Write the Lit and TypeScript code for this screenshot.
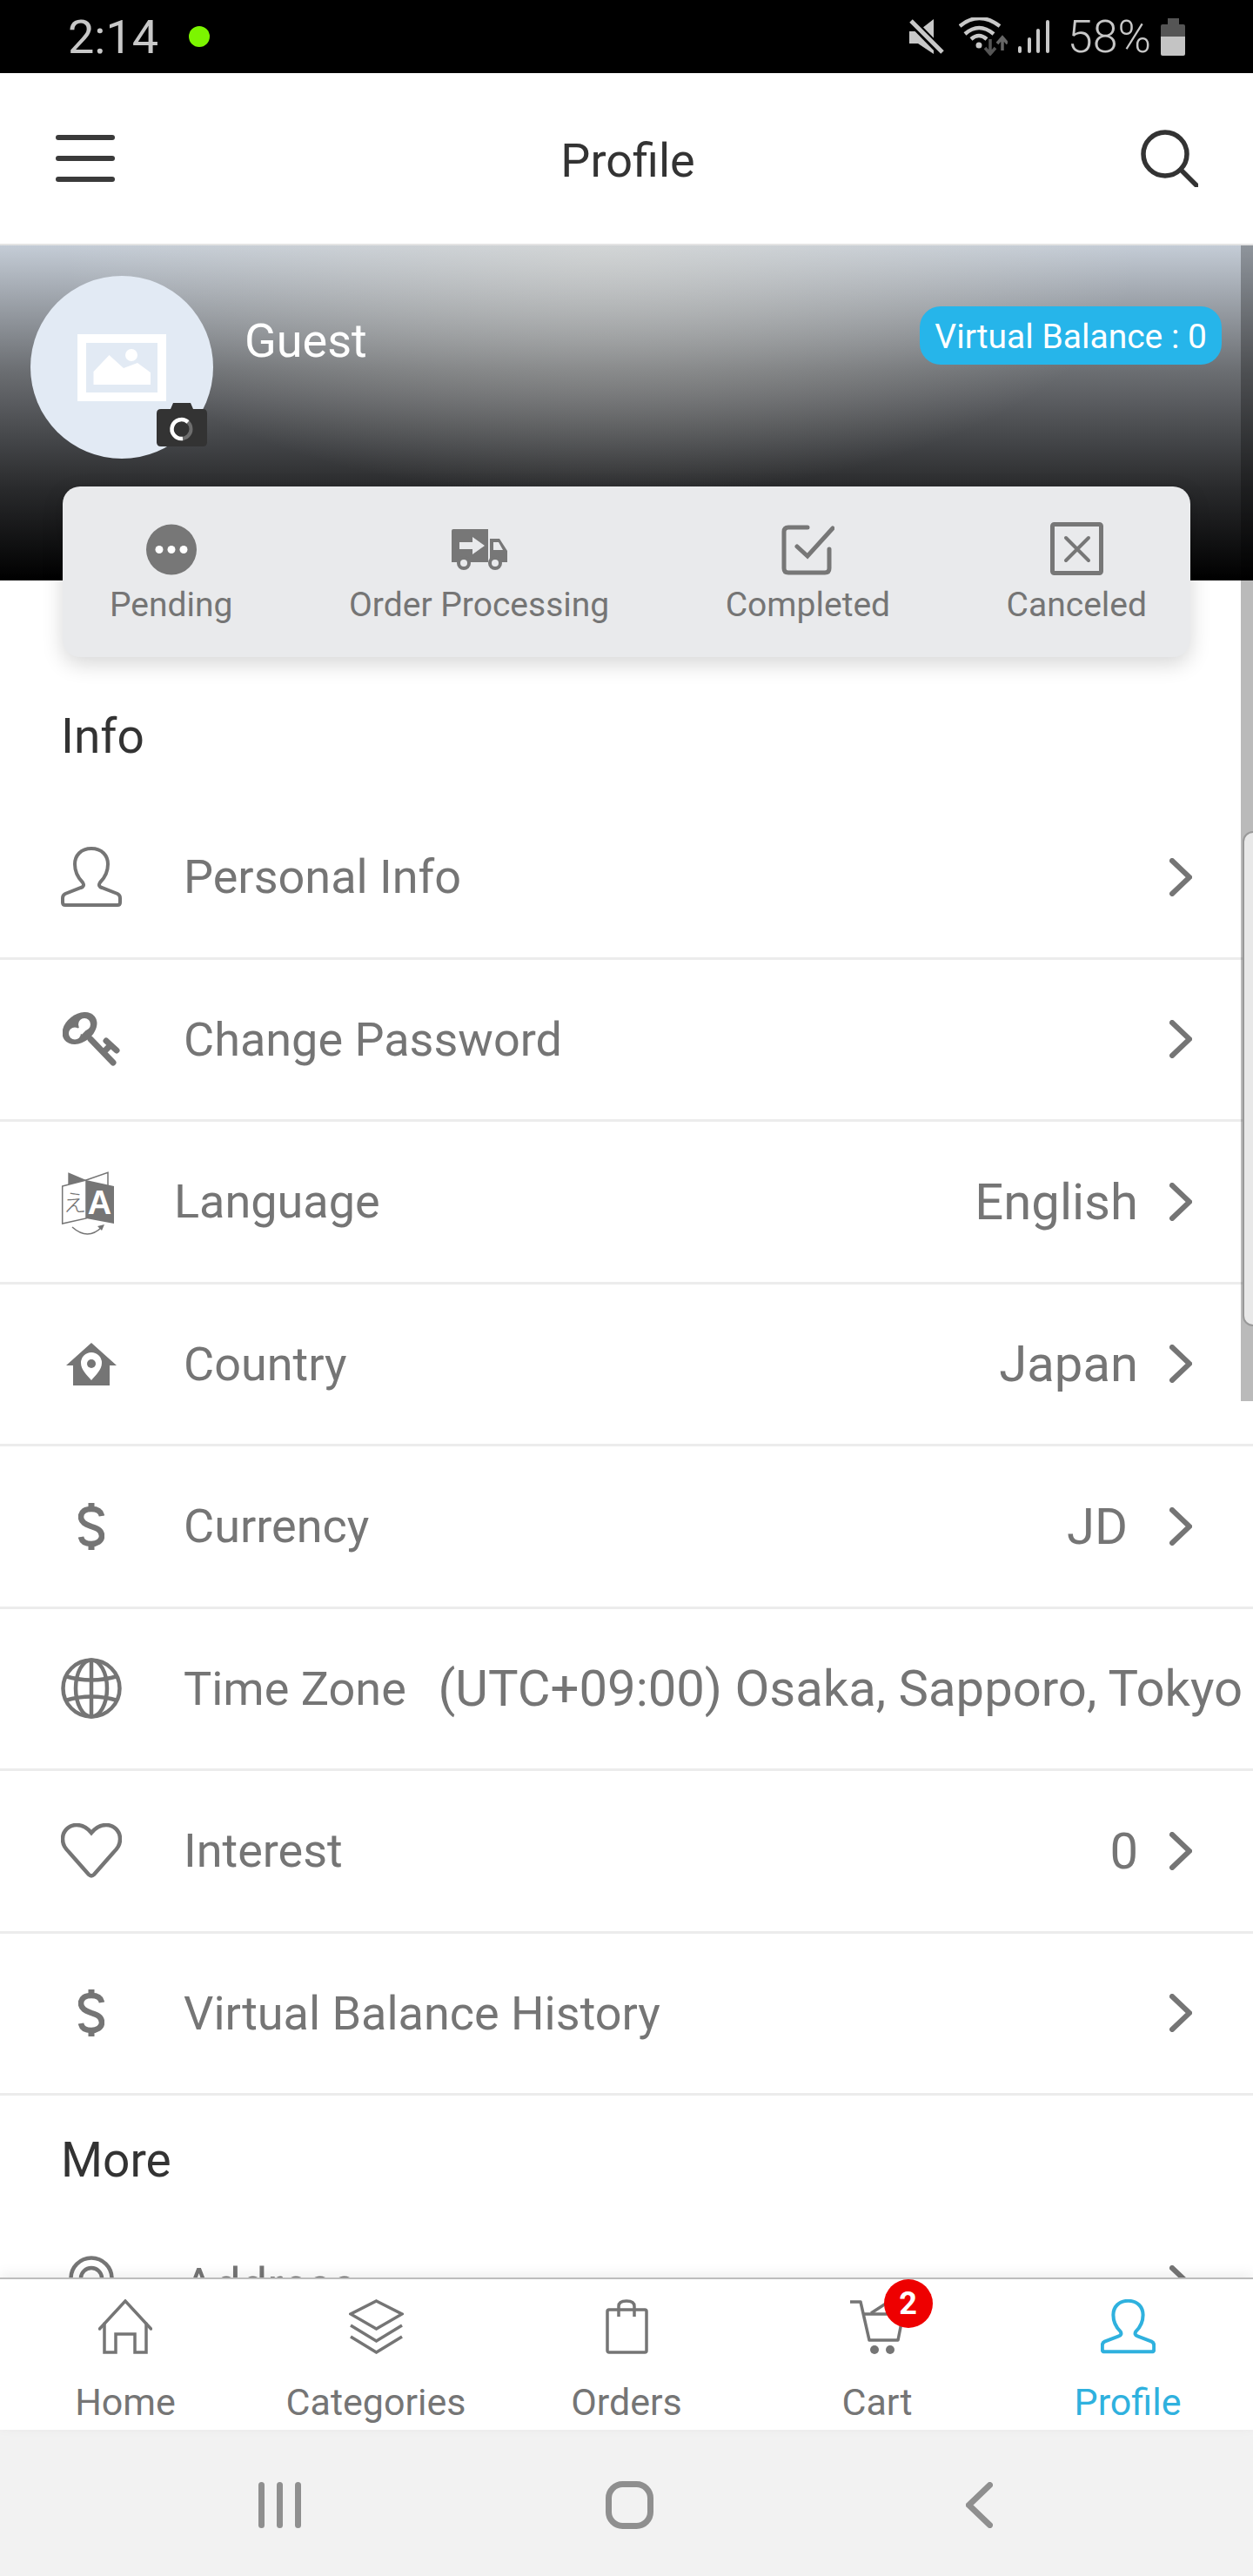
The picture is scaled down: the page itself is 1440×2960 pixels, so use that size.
import { LitElement, html, css, nothing } from "lit";
import { customElement } from "lit/decorators.js";

const personPath = "M35 2C23 2 16 10 16 20C16 30 20 36 25 41C27 44 26 46 23 47L5 54C3 55 2 57 2 59V64C2 66 3 67 5 67H65C67 67 68 66 68 64V59C68 57 67 55 65 54L47 47C44 46 43 44 45 41C50 36 54 30 54 20C54 10 47 2 35 2Z";

const icons: Record<string, unknown> = {
  person: html`<svg width="70" height="70" viewBox="0 0 70 70" fill="none" stroke="#757575" stroke-width="4"><path d=${personPath}/></svg>`,
  key: html`<svg width="66" height="62" viewBox="0 0 66 62"><ellipse cx="19.500" cy="18.500" rx="22" ry="16" transform="rotate(-38 19.500 18.500)" fill="#757575"/><circle cx="14" cy="24.500" r="7" fill="#fff"/><circle cx="25" cy="14" r="7" fill="#fff"/><rect x="18" y="16" width="8" height="8" transform="rotate(45 22 20)" fill="#fff"/><path d="M32 31L58 58M50 33L62 44M47 46L55 38" stroke="#757575" stroke-width="7" stroke-linecap="round" fill="none"/></svg>`,
  lang: html`<svg class="ovf" width="61" height="70" viewBox="0 0 61 70"><path d="M7.300 1.300L28 10L7.300 17Z" fill="#757575"/><path d="M28 10L53 1.300V17" fill="none" stroke="#757575" stroke-width="1.500"/><path d="M0.700 17L28 10V54L0.700 60Z" fill="#fff" stroke="#757575" stroke-width="1.500"/><path d="M28 10L60 17V60L28 54Z" fill="#757575"/><text x="15" y="46" font-size="27" text-anchor="middle" fill="#757575" font-family="'Noto Sans CJK JP',sans-serif" font-weight="300">え</text><text x="43.500" y="49" font-size="38" text-anchor="middle" fill="#fff" font-family="'Liberation Sans',sans-serif" font-weight="700">A</text><path d="M12 64Q30 80 46 64" fill="none" stroke="#757575" stroke-width="1.500"/><path d="M49 61L41 63L46 68Z" fill="#757575"/></svg>`,
  country: html`<svg width="58" height="49" viewBox="0 0 58 49"><path d="M29 0L58 26H50V49H8V26H0Z" fill="#757575"/><path d="M29 43C24 37 17 31 17 23A12 12 0 0 1 41 23C41 31 34 37 29 43Z" fill="#fff"/><circle cx="29" cy="24" r="5" fill="#757575"/></svg>`,
  dollar: html`<svg width="30" height="54" viewBox="0 0 30 54" fill="none"><path d="M15 0V8M15 46V54" stroke="#757575" stroke-width="7"/><path d="M27 15C26 9 21 7 15 7C8 7 3 10 3 16C3 23 10 25 15 27C21 29 27 31 27 38C27 44 21 47 15 47C9 47 4 45 3 39" stroke="#757575" stroke-width="6.500"/></svg>`,
  globe: html`<svg width="70" height="70" viewBox="0 0 70 70" fill="none" stroke="#757575" stroke-width="4.500"><circle cx="35" cy="35" r="32.500"/><ellipse cx="35" cy="35" rx="18" ry="32.500"/><path d="M35 2V68"/><path d="M5 21Q35 30 65 21M5 49Q35 40 65 49"/></svg>`,
  heart: html`<svg width="70" height="63" viewBox="0 0 70 63" fill="none" stroke="#757575" stroke-width="4.500"><path d="M35 11C30 5 25 2 18 2C9 2 2 9 2 18C2 25 5 29 10 34L32 59C34 61 36 61 38 59L60 34C65 29 68 25 68 18C68 9 61 2 52 2C45 2 40 5 35 11Z"/></svg>`,
  pin: html`<svg width="52" height="66" viewBox="0 0 52 66" fill="none" stroke="#757575" stroke-width="4.500"><path d="M2.500 26A23.500 23.500 0 0 1 49.500 26C49.500 40 34 54 26 64C18 54 2.500 40 2.500 26Z"/><circle cx="26" cy="26" r="12"/></svg>`,
  chevron: html`<svg width="26" height="44" viewBox="0 0 26 44" fill="none" stroke="#757575" stroke-width="6" stroke-linecap="round" stroke-linejoin="miter"><path d="M3 3L23 22L3 41"/></svg>`,
};

const rows = [
  { icon: "person", label: "Personal Info" },
  { icon: "key", label: "Change Password" },
  { icon: "lang", label: "Language", value: "English", tight: true },
  { icon: "country", label: "Country", value: "Japan" },
  { icon: "dollar", label: "Currency", value: "JD", pad: true },
  { icon: "globe", label: "Time Zone", value: "(UTC+09:00) Osaka, Sapporo, Tokyo", noChevron: true },
  { icon: "heart", label: "Interest", value: "0" },
  { icon: "dollar", label: "Virtual Balance History" },
];

@customElement("app-root")
export class AppRoot extends LitElement {
  static styles = css`
    :host { display: flex; flex-direction: column; width: 1440px; height: 2960px; overflow: hidden; background: #fff; font-family: Roboto, sans-serif; color: #757575; }
    svg { display: block; flex: none; }
    svg.ovf { overflow: visible; }
    .status { flex: none; height: 84px; background: #000; display: flex; align-items: center; padding: 0 78px; box-sizing: border-box; color: #c8c8c8; font-size: 54px; }
    .status .dot { width: 24px; height: 24px; border-radius: 50%; background: #7cf500; margin-left: 35px; }
    .status .right { margin-left: auto; display: flex; align-items: center; }
    .status .pct { font-size: 52px; font-weight: 300; margin: 0 11px 0 21px; }
    .header { flex: none; height: 198px; box-sizing: border-box; border-bottom: 2px solid #e4e4e4; display: flex; align-items: center; justify-content: space-between; padding: 0 63px 0 64px; }
    .header .title { font-size: 54px; color: #333; padding-top: 4px; }
    .main { flex: 1; min-height: 0; position: relative; overflow: hidden; }
    .hero { height: 385px; box-sizing: border-box; padding: 35px 36px 0 35px; display: flex; align-items: flex-start;
      background: radial-gradient(ellipse 620px 290px at 48% 0, rgba(224,222,214,.5), rgba(224,222,214,0)), linear-gradient(#c4ccd6 0%, #6c6f73 37%, #2a2b2d 72%, #000 100%); }
    .avatar { position: relative; flex: none; width: 210px; height: 210px; border-radius: 50%; background: #e2eaf4; display: flex; align-items: center; justify-content: center; }
    .avatar .cam { position: absolute; left: 145px; top: 146px; }
    .name { font-size: 54px; line-height: 60px; color: #fff; margin: 45px 0 0 36px; }
    .pill { margin: 35px 0 0 auto; height: 67px; line-height: 70px; padding: 0 17px; border-radius: 24px; background: #26b5ea; color: #fff; font-size: 39px; }
    .card { position: relative; margin: -108px 72px 0 72px; height: 196px; box-sizing: border-box; padding: 40px 50px 0 54px; border-radius: 20px; background: #e9eaec; box-shadow: 0 8px 24px rgba(0,0,0,.16); display: flex; justify-content: space-between; }
    .st { display: flex; flex-direction: column; align-items: center; font-size: 39px; line-height: 46px; }
    .st .ic { height: 62px; display: flex; align-items: flex-end; }
    .st .lb { margin-top: 11px; }
    .h { font-size: 55px; line-height: 60px; color: #333; padding-left: 70px; }
    .h.info { padding-top: 61px; padding-bottom: 40px; }
    .h.more { padding-top: 44px; padding-bottom: 20px; }
    .row { height: 186.5px; box-sizing: border-box; border-bottom: 3px solid #ececec; display: flex; align-items: center; padding: 0 70px 0 65px; font-size: 54px; white-space: nowrap; }
    .row.last { border: 0; }
    .row .ico { width: 80px; flex: none; display: flex; justify-content: center; }
    .row.tight .ico { margin-left: -4px; }
    .row .label { margin-left: 66px; }
    .row.tight .label { margin-left: 59px; }
    .row .val { margin-left: auto; font-size: 58px; }
    .row .val.pad { padding-right: 12px; }
    .row .chev { margin-left: 36px; flex: none; }
    .row .label + .chev { margin-left: auto; }
    .row.wide { padding-right: 12px; }
    .scroll { position: absolute; right: 0; top: 0; width: 14px; height: 1328px; background: rgba(0,0,0,.27); }
    .edge { position: absolute; right: -12px; top: 673px; width: 24px; height: 569px; box-sizing: border-box; background: #e8e8e8; border: 2px solid #999; border-radius: 14px; }
    .nav { flex: none; position: relative; height: 175px; box-sizing: border-box; border-top: 2px solid #bdbdbd; background: #fff; display: flex; box-shadow: 0 -4px 14px rgba(0,0,0,.07); }
    .tab { flex: 1; display: flex; flex-direction: column; align-items: center; padding-top: 23px; font-size: 43px; line-height: 50px; }
    .tab .ic { position: relative; height: 63px; }
    .tab .lb { margin-top: 30px; }
    .tab.active { color: #2fb1de; }
    .badge { position: absolute; left: 39px; top: -23px; width: 56px; height: 56px; border-radius: 50%; background: #ee0000; color: #fff; font-size: 36px; font-weight: 700; line-height: 56px; text-align: center; }
    .sys { flex: none; height: 168px; box-sizing: border-box; padding-top: 4px; background: #f2f2f2; display: flex; align-items: center; padding-left: 297px; }
    .sys .home { margin-left: 349px; }
    .sys .back { margin-left: 359px; }
  `;

  render() {
    return html`
      <div class="status">
        <span>2:14</span><span class="dot"></span>
        <div class="right">
          <svg width="40" height="42" viewBox="0 0 40 42"><path d="M0 15H10L28 1V41L10 29H0Z" fill="#c8c8c8"/><path d="M-2 -1L38 40" stroke="#000" stroke-width="10"/><path d="M2 3L38 39" stroke="#c8c8c8" stroke-width="5"/></svg>
          <svg style="margin-left:17px" width="56" height="44" viewBox="0 0 56 44" fill="none" stroke="#c8c8c8" stroke-width="4.500"><path d="M1 10Q23 -8 47 10M7 19Q23 5 40 19M14 25Q23 17 32 25"/><circle cx="23" cy="32" r="3.500" fill="#c8c8c8" stroke="none"/><path d="M36 25V42M30 35L36 42L42 35" stroke="#555" stroke-width="3.500"/><path d="M50 38V24M44 30L50 23L56 30" stroke="#666" stroke-width="3.500"/></svg>
          <svg style="margin-left:12px" width="36" height="38" viewBox="0 0 36 38" fill="#c8c8c8"><rect x="0" y="30" width="4" height="8" rx="2"/><rect x="11" y="20" width="4" height="18" rx="2"/><rect x="21" y="10" width="4" height="28" rx="2"/><rect x="32" y="0" width="4" height="38" rx="2"/></svg>
          <span class="pct">58%</span>
          <svg width="28" height="43" viewBox="0 0 28 43"><path d="M8 0H21V7H26Q28 7 28 9V21H0V9Q0 7 2 7H8Z" fill="#555"/><path d="M0 21H28V41Q28 43 26 43H2Q0 43 0 41Z" fill="#c4c4c4"/></svg>
        </div>
      </div>
      <div class="header">
        <svg width="68" height="54" viewBox="0 0 68 54" fill="#3a3a3a"><rect width="68" height="6" rx="3"/><rect y="24" width="68" height="6" rx="3"/><rect y="48" width="68" height="6" rx="3"/></svg>
        <span class="title">Profile</span>
        <svg width="66" height="66" viewBox="0 0 66 66" fill="none" stroke="#333" stroke-width="5.500"><circle cx="28" cy="28" r="25"/><path d="M46 46L64 64" stroke-linecap="round"/></svg>
      </div>
      <div class="main">
        <div class="hero">
          <div class="avatar">
            <svg width="102" height="77" viewBox="0 0 102 77"><rect x="5" y="5" width="92" height="67" fill="none" stroke="#fff" stroke-width="10"/><path d="M18.500 58V43L36.500 24L53 39L69 33L84 44V58Z" fill="#fff"/><circle cx="62" cy="24" r="7" fill="#fff"/></svg>
            <svg class="cam" width="58" height="50" viewBox="0 0 58 50"><path d="M16 7L19 0H39L42 7H53Q58 7 58 12V45Q58 50 53 50H5Q0 50 0 45V12Q0 7 5 7Z" fill="#333"/><circle cx="28.500" cy="30" r="11" fill="none" stroke="#6e6e6e" stroke-width="4"/><path d="M36 22A11 11 0 1 0 30 41" fill="none" stroke="#fff" stroke-width="4.500"/></svg>
          </div>
          <span class="name">Guest</span>
          <span class="pill">Virtual Balance : 0</span>
        </div>
        <div class="card">
          <div class="st"><div class="ic"><svg width="58" height="59" viewBox="0 0 58 59"><circle cx="29" cy="29.500" r="29" fill="#777"/><circle cx="15" cy="29.500" r="4.500" fill="#fff"/><circle cx="29" cy="29.500" r="4.500" fill="#fff"/><circle cx="43" cy="29.500" r="4.500" fill="#fff"/></svg></div><div class="lb">Pending</div></div>
          <div class="st"><div class="ic"><svg width="64" height="47" viewBox="0 0 64 47" style="margin-bottom:6px"><path d="M2 0H42V38H0V2Q0 0 2 0Z" fill="#777"/><path d="M44 11H55L64 25V38H44Z" fill="#777"/><path d="M48 15H54L59 24H48Z" fill="#e9eaec"/><path d="M9 15H24V9L38 19L24 29V23H9Z" fill="#e9eaec"/><circle cx="14" cy="39" r="8" fill="#777"/><circle cx="14" cy="39" r="4" fill="#e9eaec"/><circle cx="50" cy="39" r="8" fill="#777"/><circle cx="50" cy="39" r="4" fill="#e9eaec"/></svg></div><div class="lb">Order Processing</div></div>
          <div class="st"><div class="ic"><svg width="61" height="58" viewBox="0 0 61 58" fill="none" stroke="#777" stroke-width="5" stroke-linecap="round"><path d="M30 3H8Q3 3 3 8V50Q3 55 8 55H50Q55 55 55 50V28"/><path d="M18 25L30 36L59 4"/></svg></div><div class="lb">Completed</div></div>
          <div class="st"><div class="ic"><svg width="61" height="61" viewBox="0 0 61 61" fill="none" stroke="#777" stroke-width="5"><rect x="2.500" y="2.500" width="56" height="56" rx="2"/><path d="M18 18L44 44M44 18L18 44" stroke-width="4" stroke-linecap="round"/></svg></div><div class="lb">Canceled</div></div>
        </div>
        <div class="h info">Info</div>
        ${rows.map((r) => html`
          <div class="row ${r.tight ? "tight" : ""} ${r.noChevron ? "wide" : ""}">
            <div class="ico">${icons[r.icon]}</div>
            <span class="label">${r.label}</span>
            ${r.value ? html`<span class="val ${r.pad ? "pad" : ""}">${r.value}</span>` : nothing}
            ${r.noChevron ? nothing : html`<span class="chev">${icons.chevron}</span>`}
          </div>`)}
        <div class="h more">More</div>
        <div class="row last">
          <div class="ico">${icons.pin}</div>
          <span class="label">Address</span>
          <span class="chev">${icons.chevron}</span>
        </div>
        <div class="scroll"></div>
        <div class="edge"></div>
      </div>
      <div class="nav">
        <div class="tab"><div class="ic"><svg width="62" height="63" viewBox="0 0 62 63" fill="none" stroke="#757575" stroke-width="3.500" stroke-linecap="round"><path d="M1.500 34L31 2L60.500 34"/><path d="M7 28V61H20V40H42V61H55V28"/></svg></div><div class="lb">Home</div></div>
        <div class="tab"><div class="ic"><svg width="63" height="63" viewBox="0 0 63 63" fill="none" stroke="#757575" stroke-width="3.500"><path d="M31.500 2L61 17L31.500 34L2 17Z"/><path d="M2 30L31.500 48L61 30"/><path d="M2 43L31.500 61L61 43"/></svg></div><div class="lb">Categories</div></div>
        <div class="tab"><div class="ic"><svg width="49" height="63" viewBox="0 0 49 63" fill="none" stroke="#757575" stroke-width="3.500"><rect x="2" y="12" width="45" height="49" rx="2"/><path d="M15 20V8Q15 2 24 2Q33 2 33 8V20"/></svg></div><div class="lb">Orders</div></div>
        <div class="tab"><div class="ic"><svg width="63" height="63" viewBox="0 0 63 63" fill="none" stroke="#757575" stroke-width="3.500" stroke-linejoin="round"><path d="M0 3H12L22 47H55L61 17H16"/><path d="M24 16L41 5L50 16"/><circle cx="28" cy="58" r="5" fill="#757575" stroke="none"/><circle cx="46" cy="58" r="5" fill="#757575" stroke="none"/></svg><span class="badge">2</span></div><div class="lb">Cart</div></div>
        <div class="tab active"><div class="ic"><svg width="63" height="63" viewBox="0 0 70 70" fill="none" stroke="#2fb1de" stroke-width="4.500"><path d=${personPath}/></svg></div><div class="lb">Profile</div></div>
      </div>
      <div class="sys">
        <svg width="50" height="53" viewBox="0 0 50 53" fill="#8f8f8f"><rect width="7" height="53" rx="3.500"/><rect x="21" width="7" height="53" rx="3.500"/><rect x="42" width="7" height="53" rx="3.500"/></svg>
        <svg class="home" width="55" height="55" viewBox="0 0 55 55" fill="none" stroke="#8f8f8f" stroke-width="7"><rect x="3.500" y="3.500" width="48" height="48" rx="16"/></svg>
        <svg class="back" width="31" height="53" viewBox="0 0 31 53" fill="none" stroke="#8f8f8f" stroke-width="7" stroke-linecap="round"><path d="M27.500 3.500L3.500 26.500L27.500 49.500"/></svg>
      </div>
    `;
  }
}
